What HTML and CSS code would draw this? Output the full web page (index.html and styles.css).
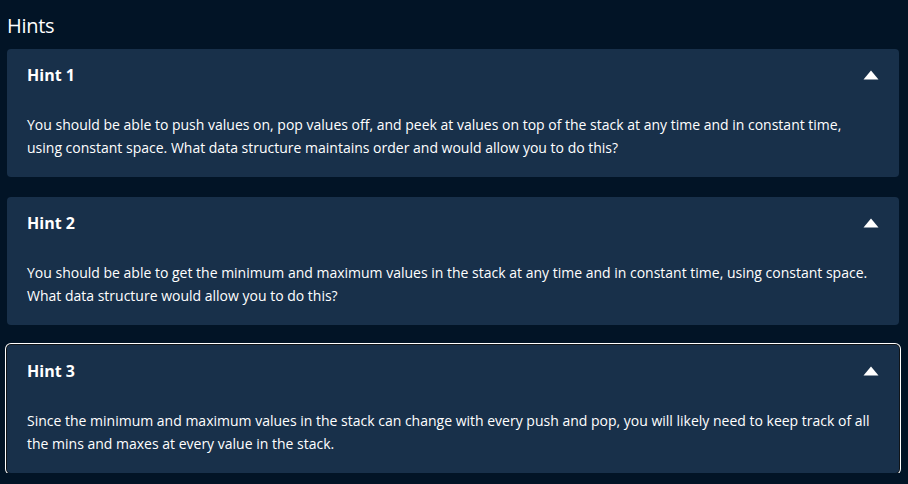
FILE: index.html
```html
<!DOCTYPE html>
<html lang="en">
<head>
<meta charset="utf-8">
<title>Hints</title>
<link rel="stylesheet" href="styles.css">
</head>
<body>
<main class="hints">
  <h2 class="hints-title">Hints</h2>
  <section class="hint">
    <div class="hint-header">
      <h3 class="hint-name">Hint 1</h3>
      <svg class="caret" width="16" height="10" viewBox="0 0 16 10"><path d="M8 0.5 L15.5 9.5 L0.5 9.5 Z" fill="#ffffff"/></svg>
    </div>
    <p class="hint-body">You should be able to push values on, pop values off, and peek at values on top of the stack at any time and in constant time, using constant space. What data structure maintains order and would allow you to do this?</p>
  </section>
  <section class="hint">
    <div class="hint-header">
      <h3 class="hint-name">Hint 2</h3>
      <svg class="caret" width="16" height="10" viewBox="0 0 16 10"><path d="M8 0.5 L15.5 9.5 L0.5 9.5 Z" fill="#ffffff"/></svg>
    </div>
    <p class="hint-body">You should be able to get the minimum and maximum values in the stack at any time and in constant time, using constant space. What data structure would allow you to do this?</p>
  </section>
  <section class="hint focused">
    <div class="hint-header">
      <h3 class="hint-name">Hint 3</h3>
      <svg class="caret" width="16" height="10" viewBox="0 0 16 10"><path d="M8 0.5 L15.5 9.5 L0.5 9.5 Z" fill="#ffffff"/></svg>
    </div>
    <p class="hint-body">Since the minimum and maximum values in the stack can change with every push and pop, you will likely need to keep track of all the mins and maxes at every value in the stack.</p>
  </section>
</main>
</body>
</html>
```
FILE: styles.css
```css
html, body {
  margin: 0;
  padding: 0;
  background: #021426;
  color: #ffffff;
  font-family: "Open Sans", "Noto Sans", sans-serif;
}
.hints {
  padding: 12px 9px 0 7px;
  display: flex;
  flex-direction: column;
  gap: 20px;
}
.hints-title {
  margin: 0 0 -11px 0;
  font-size: 20px;
  font-weight: 400;
  line-height: 28px;
  letter-spacing: -0.3px;
}
.hint {
  background: #18304a;
  border-radius: 4px;
  padding: 14px 20px 18px 20px;
}
.hint.focused {
  box-shadow: 0 0 0 1px #101418, 0 0 0 2px #ffffff;
}
.hint-header {
  display: flex;
  align-items: center;
  justify-content: space-between;
  height: 24px;
}
.hint-name {
  margin: 0;
  font-size: 16px;
  font-weight: 700;
  line-height: 24px;
}
.caret {
  display: block;
}
.hint-body {
  margin: 26px 0 0 0;
  font-size: 14px;
  line-height: 23px;
}
```
